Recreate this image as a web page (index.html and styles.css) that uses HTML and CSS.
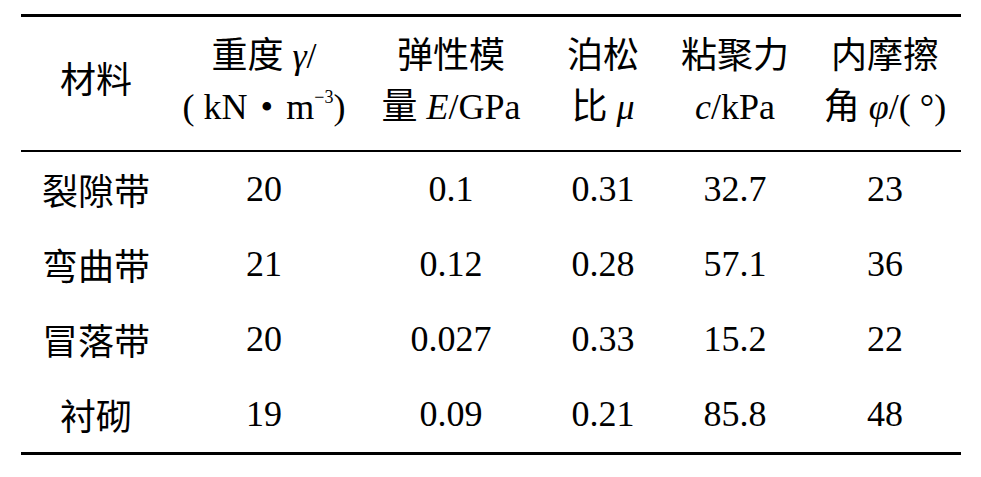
FILE: index.html
```html
<!DOCTYPE html>
<html lang="zh">
<head>
<meta charset="utf-8">
<title>材料参数</title>
<link rel="stylesheet" href="styles.css">
</head>
<body>
<div class="page">
  <table class="params">
    <colgroup>
      <col class="c1"><col class="c2"><col class="c3"><col class="c4"><col class="c5"><col class="c6">
    </colgroup>
    <thead>
      <tr>
        <th>材料</th>
        <th><span class="ln">重度 <i>γ</i>/</span><span class="ln">( kN <span class="dot">•</span> m<sup>−3</sup>)</span></th>
        <th><span class="ln">弹性模</span><span class="ln">量 <i>E</i>/GPa</span></th>
        <th><span class="ln">泊松</span><span class="ln">比 <i>μ</i></span></th>
        <th><span class="ln">粘聚力</span><span class="ln"><i>c</i>/kPa</span></th>
        <th><span class="ln">内摩擦</span><span class="ln">角 <i>φ</i>/( °)</span></th>
      </tr>
    </thead>
    <tbody>
      <tr><td class="name">裂隙带</td><td>20</td><td>0.1</td><td>0.31</td><td>32.7</td><td>23</td></tr>
      <tr><td class="name">弯曲带</td><td>21</td><td>0.12</td><td>0.28</td><td>57.1</td><td>36</td></tr>
      <tr><td class="name">冒落带</td><td>20</td><td>0.027</td><td>0.33</td><td>15.2</td><td>22</td></tr>
      <tr><td class="name">衬砌</td><td>19</td><td>0.09</td><td>0.21</td><td>85.8</td><td>48</td></tr>
    </tbody>
  </table>
</div>
</body>
</html>
```
FILE: styles.css
```css
html, body {
  margin: 0;
  padding: 0;
  background: #ffffff;
}
.page {
  padding: 14px 0 0 21px;
}
.params {
  width: 940px;
  border-collapse: collapse;
  table-layout: fixed;
  font-family: "Liberation Serif", "Noto Sans CJK SC", serif;
  font-size: 36px;
  color: #000;
  border-top: 3px solid #000;
  border-bottom: 3px solid #000;
}
.c1 { width: 150px; }
.c2 { width: 186px; }
.c3 { width: 188px; }
.c4 { width: 116px; }
.c5 { width: 148px; }
.c6 { width: 152px; }
.params th {
  font-weight: normal;
  height: 129px;
  padding: 0 0 4px 0;
  vertical-align: middle;
  text-align: center;
  border-bottom: 2px solid #000;
  line-height: 51px;
  white-space: nowrap;
}
.params th .ln {
  display: block;
}
.params td {
  height: 75px;
  padding: 0;
  text-align: center;
  vertical-align: middle;
  line-height: 75px;
  white-space: nowrap;
}
.params td.name {
  font-family: "Noto Sans CJK SC", sans-serif;
}
.params i {
  font-style: italic;
}
.params sup {
  font-size: 0.5em;
  line-height: 0;
  vertical-align: 0.9em;
}
.dot {
  margin: 0 4px;
}
```
